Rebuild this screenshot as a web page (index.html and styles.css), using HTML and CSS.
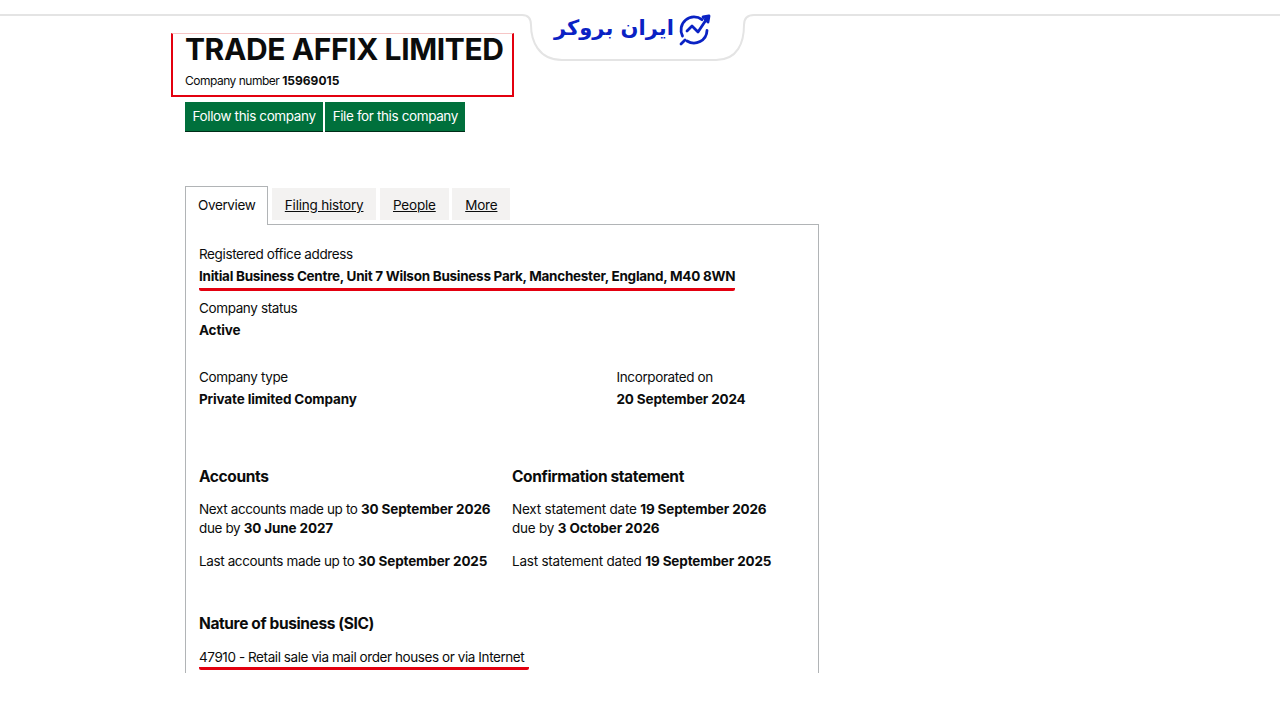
FILE: index.html
```html
<!DOCTYPE html>
<html lang="en">
<head>
    <meta charset="UTF-8">
    <meta name="viewport" content="width=device-width, initial-scale=1.0">
    <title>TRADE AFFIX LIMITED</title>
    <link rel="stylesheet" href="styles.css">
</head>
<body>
    <div class="frame">
        <!-- logo tab over the top line -->
        <div class="logo-tab">
            <svg class="tab-shape" viewBox="0 0 1280 62" fill="#fff" stroke="#e4e4e4" stroke-width="2">
                <path d="M0 15H522C529 15 531 19 531 25C531 40 538 60 562 60H716C738 60 744 42 744 25C744 19 747 15 754 15H1280"/>
            </svg>
            <div class="logo">
                <span class="logo-text" dir="rtl">ایران بروکر</span>
                <svg class="logo-icon" viewBox="0 0 34 34" fill="none" stroke="#0a22c4" stroke-width="2.8" stroke-linecap="round" stroke-linejoin="round">
                    <path d="M24 6.7A13 13 0 0 0 4.5 23"/>
                    <path d="M9 28A13 13 0 0 0 29 17.5"/>
                    <path d="M9 18l5-5 6 6 8-12"/>
                    <path d="M25 4l6-1-1 6z" fill="#0a22c4"/>
                    <path d="M3 31l4-4"/>
                </svg>
            </div>
        </div>

        <div class="company-box">
            <h1 class="company-name">TRADE AFFIX LIMITED</h1>
            <p class="company-number">Company number <b>15969015</b></p>
        </div>
        <div class="actions">
            <a class="btn">Follow this company</a>
            <a class="btn">File for this company</a>
        </div>

        <div class="tabs">
            <span class="tab active">Overview</span>
            <span class="tab"><a>Filing history</a></span>
            <span class="tab"><a>People</a></span>
            <span class="tab"><a>More</a></span>
        </div>

        <div class="panel">
            <div class="address">
                <p class="label">Registered office address</p>
                <p class="value underlined">Initial Business Centre, Unit 7 Wilson Business Park, Manchester, England, M40 8WN</p>
            </div>
            <div class="status">
                <p class="label">Company status</p>
                <p class="value">Active</p>
            </div>
            <div class="type-row">
                <div>
                    <p class="label">Company type</p>
                    <p class="value">Private limited Company</p>
                </div>
                <div>
                    <p class="label">Incorporated on</p>
                    <p class="value">20 September 2024</p>
                </div>
            </div>
            <div class="dates">
                <div>
                    <h2>Accounts</h2>
                    <p class="line">Next accounts made up to <b>30 September 2026</b><br>due by <b>30 June 2027</b></p>
                    <p class="line">Last accounts made up to <b>30 September 2025</b></p>
                </div>
                <div class="statement">
                    <h2>Confirmation statement</h2>
                    <p class="line">Next statement date <b>19 September 2026</b><br>due by <b>3 October 2026</b></p>
                    <p class="line">Last statement dated <b>19 September 2025</b></p>
                </div>
            </div>
            <h2 class="sic-title">Nature of business (SIC)</h2>
            <p class="sic underlined">47910 - Retail sale via mail order houses or via Internet</p>
        </div>
    </div>
</body>
</html>
```

FILE: styles.css
```css
* {
    box-sizing: border-box;
}
body {
    margin: 0;
    background: #fff;
    color: #0b0c0c;
    font-family: Inter, "Liberation Sans", sans-serif;
    font-size: 13.5px;
    letter-spacing: -0.38px;
}
p, h1, h2 {
    margin: 0;
}
b {
    letter-spacing: -0.13px;
}
.frame {
    position: relative;
    height: 673px;
    overflow: hidden;
    padding: 33px 0 0 171px;
}
.logo-tab {
    position: absolute;
    top: 0;
    left: 0;
    width: 100%;
    height: 62px;
}
.tab-shape {
    position: absolute;
    top: 0;
    left: 0;
    width: 1280px;
    height: 62px;
}
.logo {
    position: absolute;
    top: 13px;
    left: 554px;
    display: flex;
    align-items: center;
    gap: 4px;
}
.logo-icon {
    width: 34px;
    height: 34px;
}
.logo-text {
    color: #0a22c4;
    font-family: "DejaVu Sans", sans-serif;
    font-weight: bold;
    font-size: 21px;
    letter-spacing: 0;
    margin-top: -5px;
}
.company-box {
    width: 343px;
    height: 64px;
    border: 2px solid #e3000f;
    border-top: 1px solid #f6c6c6;
    padding-left: 12px;
}
.company-name {
    font-size: 30px;
    font-weight: 700;
    line-height: 30px;
    letter-spacing: -0.4px;
    color: #0b0c0c;
    white-space: nowrap;
}
.company-number {
    font-size: 12px;
    line-height: 16px;
    margin-top: 9px;
    letter-spacing: -0.5px;
}
.company-number b {
    letter-spacing: 0;
}
.actions {
    display: flex;
    gap: 2px;
    margin: 5px 0 0 14px;
}
.btn {
    background: #00703c;
    color: #fff;
    line-height: 28px;
    height: 29px;
    padding: 0 7.5px;
    box-shadow: 0 1px 0 #002d18;
}
.tabs {
    display: flex;
    align-items: flex-end;
    gap: 3.5px;
    margin: 54px 0 0 14px;
    height: 39px;
    position: relative;
    z-index: 1;
}
.tab {
    background: #f3f2f1;
    height: 32px;
    line-height: 35px;
    padding: 0 13px;
    margin-bottom: 4px;
    letter-spacing: -0.2px;
}
.tab a {
    text-decoration: underline;
}
.tab.active {
    background: #fff;
    border: 1px solid #b1b4b6;
    border-bottom: none;
    height: 39px;
    line-height: 37px;
    margin-bottom: -1px;
    padding: 0 12px;
    letter-spacing: -0.38px;
}
.panel {
    width: 634px;
    height: 460px;
    margin-left: 14px;
    border: 1px solid #b1b4b6;
    padding: 18px 13px 0;
}
.label,
.value {
    line-height: 22px;
}
.value {
    font-weight: 700;
    letter-spacing: -0.15px;
}
.underlined {
    display: inline-block;
    border-bottom: 3px solid #e3000f;
    border-radius: 2px;
}
.address {
    height: 54px;
}
.address .value {
    letter-spacing: -0.27px;
    padding-bottom: 1px;
}
.status {
    height: 69px;
}
.type-row {
    display: grid;
    grid-template-columns: 417.5px 1fr;
    height: 100px;
}
.dates {
    display: grid;
    grid-template-columns: 313px 1fr;
}
.statement .line {
    letter-spacing: -0.22px;
}
h2 {
    font-size: 15.5px;
    font-weight: 700;
    line-height: 22px;
    margin-bottom: 12px;
    letter-spacing: -0.38px;
}
.line {
    line-height: 18.5px;
    margin-bottom: 15px;
}
.sic-title {
    margin-top: 27px;
}
.sic {
    line-height: 20px;
    padding-right: 5px;
    letter-spacing: -0.42px;
}
```
